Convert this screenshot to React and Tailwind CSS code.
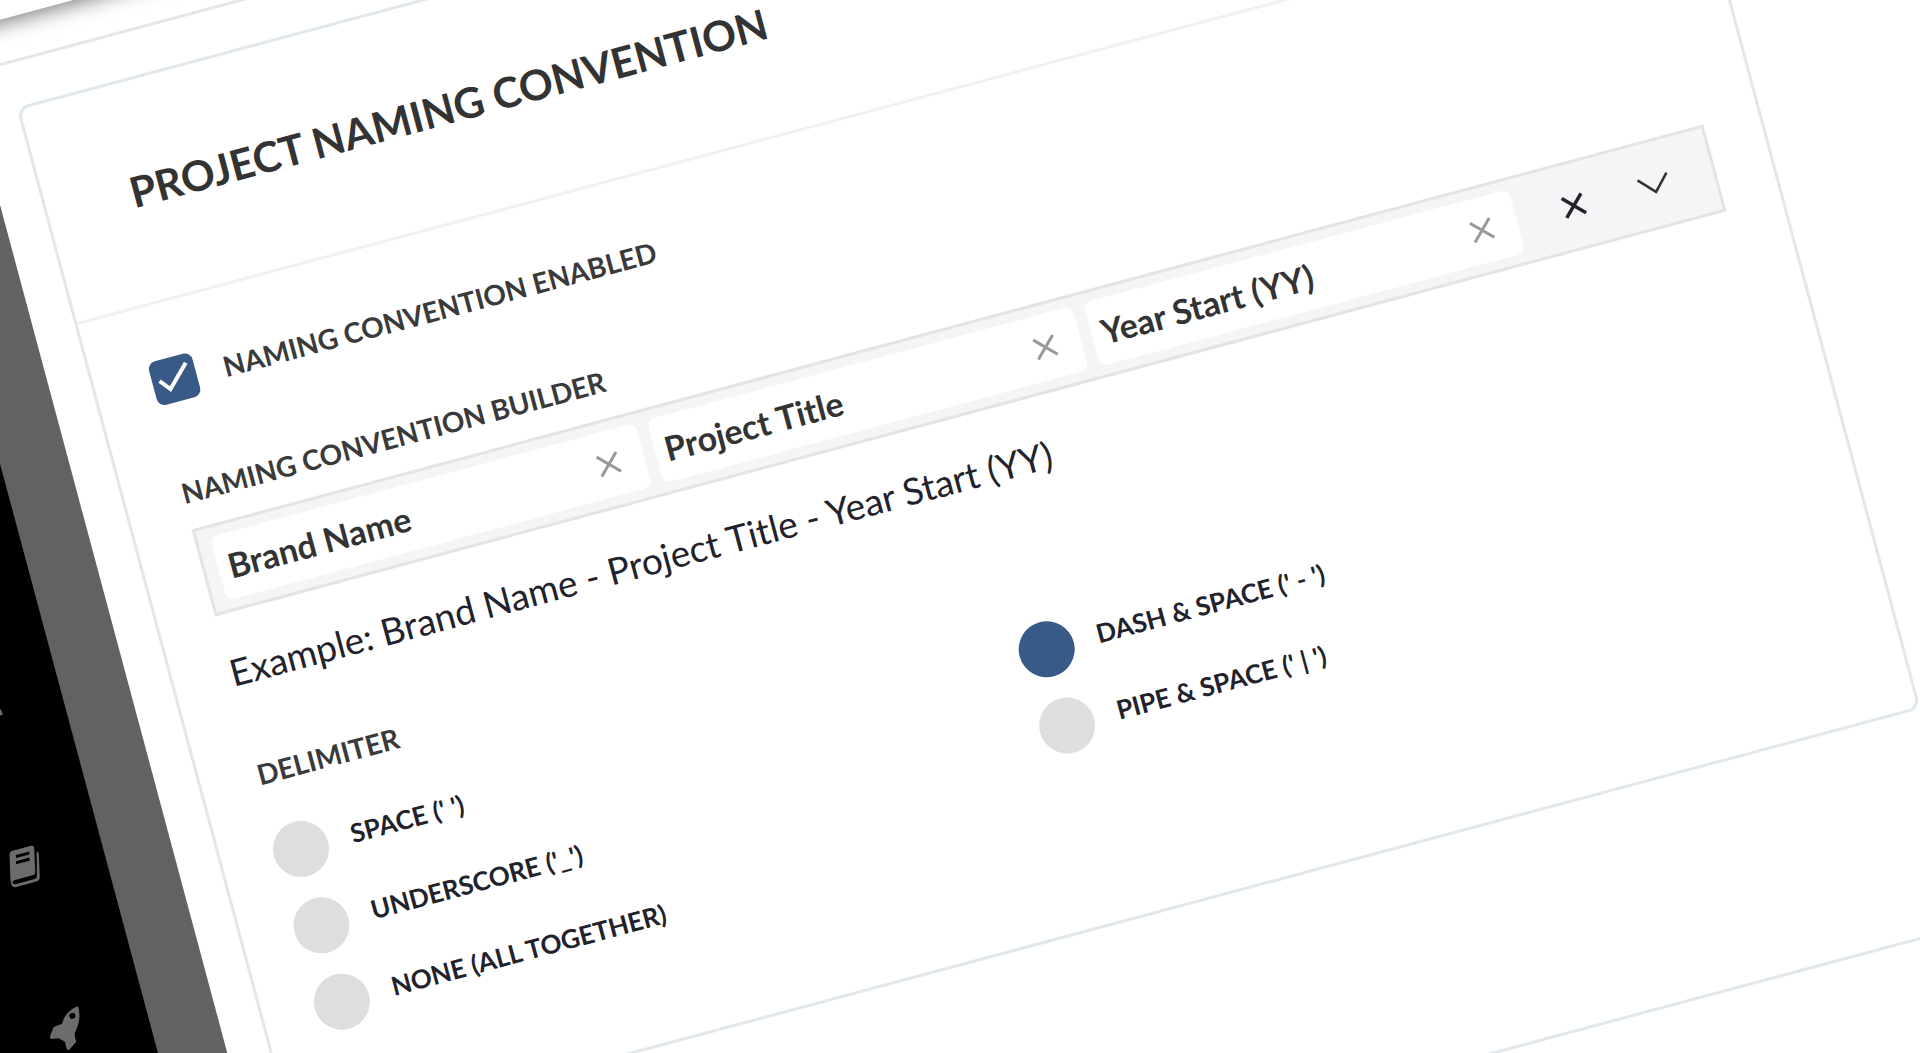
import React, { useState } from 'react';

// Builder tokens, in the order they end up in the name
const initialTokens = ['Brand Name', 'Project Title', 'Year Start (YY)'];

// Delimiters, one list per column
const delimiterColumns = [
  [
    { id: 'space', label: "SPACE (' ')", value: ' ' },
    { id: 'underscore', label: "UNDERSCORE ('_')", value: '_' },
    { id: 'none', label: 'NONE (ALL TOGETHER)', value: '' },
  ],
  [
    { id: 'dash', label: "DASH & SPACE (' - ')", value: ' - ' },
    { id: 'pipe', label: "PIPE & SPACE (' | ')", value: ' | ' },
  ],
];

function CrossIcon({ strokeWidth }) {
  return (
    <svg viewBox="0 0 24 24" className="w-6 h-6" fill="none" stroke="currentColor" strokeWidth={strokeWidth} aria-hidden="true">
      <path d="M2 2L22 22M22 2L2 22" />
    </svg>
  );
}

function UserIcon() {
  return (
    <svg viewBox="0 0 36 40" className="w-9 h-10" aria-hidden="true">
      <path fill="currentColor" d="M18 2a8 8 0 110 17 8 8 0 010-17zM0 36q0-13 18-13t18 13z" />
    </svg>
  );
}

function BookIcon() {
  return (
    <svg viewBox="0 0 36 40" className="w-9 h-10" aria-hidden="true">
      <path fill="currentColor" fillRule="evenodd" d="M10 2h19q3 0 2.500 3l-5 23q-.6 3-3.500 3H4q-2 0-2.500 2 0 2 2.500 2h20q2.500 0 3-2.500L33 9q2 .5 1.500 3l-5 22q-.8 4-4.500 4H4q-5 0-4-7L6 5q.8-3 4-3zM12 7l-.6 3h14l.6-3zM10.500 13l-.6 3h14l.6-3z" />
    </svg>
  );
}

function RocketIcon() {
  return (
    <svg viewBox="0 0 40 44" className="w-10 h-11" aria-hidden="true">
      <path fill="currentColor" fillRule="evenodd" d="M37 1c0 10-3 17-10 25l-1 3 0 6-9 6q-2 0-2-2l0-7-5-5-7-1q-2-1-1-3l6-8 9-1C21 6 29 2 37 1zM29 6a3 3 0 100 6 3 3 0 000-6z" />
    </svg>
  );
}

function SideNav() {
  return (
    <nav className="w-[480px] shrink-0 bg-black text-[#6c6c6c] pt-[1155px] pr-[62px] flex flex-col items-end gap-32">
      <a href="#profile" aria-label="Profile"><UserIcon /></a>
      <a href="#library" aria-label="Library"><BookIcon /></a>
      <a href="#launch" aria-label="Launch"><RocketIcon /></a>
    </nav>
  );
}

function Token({ name, onRemove }) {
  return (
    <div className="w-[440px] h-[66px] pl-2.5 pr-6 flex items-center justify-between bg-white rounded-lg text-[34px] leading-10 font-bold text-[#333]">
      <span>{name}</span>
      <button type="button" onClick={onRemove} aria-label={`Remove ${name}`} className="text-[#999]">
        <CrossIcon strokeWidth="3" />
      </button>
    </div>
  );
}

function DelimiterOption({ option, selected, onSelect }) {
  return (
    <label className="flex items-center gap-6 h-[79px] text-[26px] leading-10 font-bold text-[#22222c]">
      <input
        type="radio"
        name="delimiter"
        checked={selected}
        onChange={onSelect}
        className="appearance-none size-14 rounded-full bg-[#dedede] checked:bg-[#375a87]"
      />
      <span className="pb-1">{option.label}</span>
    </label>
  );
}

function NamingConventionCard() {
  const [enabled, setEnabled] = useState(true);
  const [tokens, setTokens] = useState(initialTokens);
  const [delimiter, setDelimiter] = useState('dash');

  const current = delimiterColumns.flat().find((d) => d.id === delimiter);

  return (
    <section className="w-[1684px] border-3 border-[#e1e8ed] rounded-xl bg-white">
      <h1 className="h-[223px] pt-[84px] pl-[85px] text-[42px] leading-[50px] font-bold text-[#333] border-b-3 border-[#eff2f5]">
        PROJECT NAMING CONVENTION
      </h1>
      <div className="pl-[57px] pr-14 pt-[55px] pb-[84px]">
        <label className="flex items-center gap-7 text-[28px] leading-10 font-bold text-[#3a3a3a]">
          <span className="relative flex">
            <input
              type="checkbox"
              checked={enabled}
              onChange={(e) => setEnabled(e.target.checked)}
              className="peer appearance-none size-[45px] rounded-lg bg-[#dedede] checked:bg-[#375a87]"
            />
            <svg viewBox="0 0 45 45" className="absolute inset-0 size-[45px] hidden peer-checked:block pointer-events-none" fill="none" stroke="#fff" strokeWidth="4" aria-hidden="true">
              <path d="M7.500 20.500L16 31L37.500 9.500" />
            </svg>
          </span>
          NAMING CONVENTION ENABLED
        </label>

        <h2 className="mt-[70px] text-[28px] leading-10 font-bold text-[#3a3a3a]">NAMING CONVENTION BUILDER</h2>
        <div className="mt-[17px] h-[90px] px-[13px] flex items-center gap-3 border-3 border-[#e4e4e4] bg-[#f4f5f7]">
          {tokens.map((name) => (
            <Token key={name} name={name} onRemove={() => setTokens(tokens.filter((t) => t !== name))} />
          ))}
          <div className="ml-auto flex items-center gap-[54px] pr-[30px] text-[#22222c]">
            <button type="button" aria-label="Clear all" onClick={() => setTokens([])}>
              <CrossIcon strokeWidth="3.5" />
            </button>
            <button type="button" aria-label="Show options">
              <svg viewBox="0 0 34 20" className="w-[34px] h-5" fill="none" stroke="#333" strokeWidth="2.5" aria-hidden="true">
                <path d="M2 2L17 18L32 2" />
              </svg>
            </button>
          </div>
        </div>

        <p className="mt-8 text-[37px] leading-[54px] text-[#22222c]">
          Example: {tokens.join(current.value)}
        </p>

        <h2 className="mt-[58px] text-[28px] leading-10 font-bold text-[#3a3a3a]">DELIMITER</h2>
        <div className="mt-[23px] -ml-[5px] mr-[26px] grid grid-cols-2">
          {delimiterColumns.map((column, i) => (
            <div key={i}>
              {column.map((option) => (
                <DelimiterOption key={option.id} option={option} selected={delimiter === option.id} onSelect={() => setDelimiter(option.id)} />
              ))}
            </div>
          ))}
        </div>
      </div>
    </section>
  );
}

function App() {
  return (
    <div className="h-screen overflow-hidden bg-white font-['Lato',sans-serif]">
      {/* the whole workspace is tilted around the top left corner of the window */}
      <div className="relative -left-[600px] -top-[500px] w-max origin-[600px_500px] -rotate-15 flex bg-[#626264]">
        <SideNav />
        <div className="w-[67px] shrink-0" />
        <main className="w-[2400px] bg-white">
          <div className="h-[519px] bg-white shadow-[0_4px_20px_rgba(0,0,0,0.5)]" />
          <div className="mt-[42px] border-t-3 border-[#e6e6e6] pt-[44px] pl-[41px] flex flex-col gap-[220px]">
            <NamingConventionCard />
            <section className="w-[1684px] h-[400px] border-3 border-[#e1e8ed] rounded-xl bg-white" />
          </div>
        </main>
      </div>
    </div>
  );
}

export default App;
